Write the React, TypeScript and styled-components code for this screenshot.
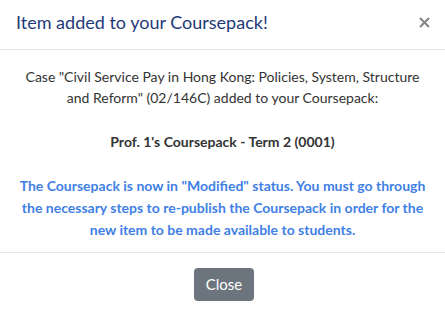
import React from 'react';
import styled, { createGlobalStyle } from 'styled-components';

const Global = createGlobalStyle`
  body {
    margin: 0;
    background: #fff;
    font-family: Lato, "Open Sans", sans-serif;
  }
`;

const Modal = styled.div`
  width: 445px;
  background: #fff;
`;

const Header = styled.div`
  display: flex;
  align-items: center;
  justify-content: space-between;
  padding: 10px 13px 14px 16px;
  border-bottom: 1px solid #e6e6e6;
`;

const Title = styled.h5`
  margin: 0;
  font-size: 18px;
  font-weight: 400;
  line-height: 25px;
  color: #1f3a78;
`;

const CloseX = styled.button`
  border: none;
  background: none;
  padding: 0;
  width: 16px;
  height: 16px;
  display: flex;
  align-items: center;
  justify-content: center;
  cursor: pointer;
`;

const Body = styled.div`
  padding: 16px 16px 11px;
  text-align: center;
  font-size: 14px;
  line-height: 21px;
  color: #333;
`;

const P = styled.p<{ $tone?: 'bold' | 'note' }>`
  margin: 0 0 23px;
  font-weight: ${(p) => (p.$tone ? 700 : 400)};
  color: ${(p) => (p.$tone === 'note' ? '#3f7fe6' : '#333')};
  line-height: ${(p) => (p.$tone === 'note' ? '22px' : '21px')};
  &:last-child {
    margin-bottom: 0;
  }
`;

const Footer = styled.div`
  display: flex;
  justify-content: center;
  padding: 15px 16px 16px;
  border-top: 1px solid #e6e6e6;
`;

const Button = styled.button`
  font-family: Lato, sans-serif;
  font-size: 15px;
  line-height: 21px;
  padding: 6px 12px;
  color: #fff;
  background: #6c757d;
  border: none;
  border-radius: 4px;
  margin-left: 3px;
  cursor: pointer;
`;

export default function App() {
  return (
    <>
      <Global />
      <Modal>
        <Header>
          <Title>Item added to your Coursepack!</Title>
          <CloseX aria-label="Close">
            <svg width="11" height="11" viewBox="0 0 11 11">
              <path d="M1 1 L10 10 M10 1 L1 10" stroke="#858585" strokeWidth="2" />
            </svg>
          </CloseX>
        </Header>
        <Body>
          <P>
            Case "Civil Service Pay in Hong Kong: Policies, System, Structure and Reform" (02/146C) added to
            your Coursepack:
          </P>
          <P $tone="bold">Prof. 1's Coursepack - Term 2 (0001)</P>
          <P $tone="note">
            The Coursepack is now in "Modified" status. You must go through the necessary steps to re-publish
            the Coursepack in order for the new item to be made available to students.
          </P>
        </Body>
        <Footer>
          <Button>Close</Button>
        </Footer>
      </Modal>
    </>
  );
}
